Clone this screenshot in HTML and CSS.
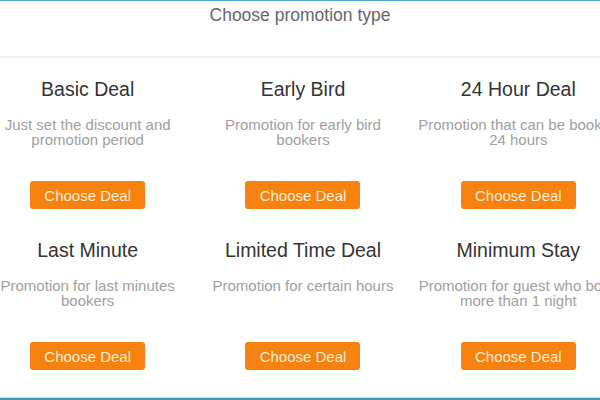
FILE: index.html
```html
<!DOCTYPE html>
<html>
<head>
<meta charset="utf-8">
<link rel="stylesheet" href="styles.css">
</head>
<body>
<div class="frame">
  <div class="header">Choose promotion type</div>
  <div class="grid">
    <div class="card">
      <div class="title">Basic Deal</div>
      <div class="desc">Just set the discount and<br>promotion period</div>
      <button class="btn">Choose Deal</button>
    </div>
    <div class="card">
      <div class="title">Early Bird</div>
      <div class="desc">Promotion for early bird<br>bookers</div>
      <button class="btn">Choose Deal</button>
    </div>
    <div class="card">
      <div class="title">24 Hour Deal</div>
      <div class="desc">Promotion that can be booked<br>24 hours</div>
      <button class="btn">Choose Deal</button>
    </div>
    <div class="card">
      <div class="title">Last Minute</div>
      <div class="desc">Promotion for last minutes<br>bookers</div>
      <button class="btn">Choose Deal</button>
    </div>
    <div class="card">
      <div class="title">Limited Time Deal</div>
      <div class="desc">Promotion for certain hours</div>
      <button class="btn">Choose Deal</button>
    </div>
    <div class="card">
      <div class="title">Minimum Stay</div>
      <div class="desc">Promotion for guest who book<br>more than 1 night</div>
      <button class="btn">Choose Deal</button>
    </div>
  </div>
</div>
</body>
</html>
```

FILE: styles.css
```css
html, body {
  margin: 0;
  padding: 0;
  background: #ffffff;
  overflow: hidden;
}
body {
  font-family: "Liberation Sans", Arial, sans-serif;
}
.frame {
  box-sizing: border-box;
  width: 600px;
  height: 400px;
  border-top: 1px solid #4aa6be;
  border-bottom: 2px solid #3f98b0;
  box-shadow: inset 0 -1px 0 #c4e8f1;
  overflow: hidden;
}
.header {
  box-sizing: border-box;
  height: 57px;
  padding-top: 4px;
  text-align: center;
  font-size: 17.5px;
  line-height: 21px;
  color: #666666;
  border-bottom: 2px solid #efefef;
}
.grid {
  width: 646px;
  margin-left: -20px;
  display: grid;
  grid-template-columns: repeat(3, 1fr);
}
.card {
  display: flex;
  flex-direction: column;
  align-items: center;
  padding: 20px 0 10px;
  text-align: center;
  min-width: 0;
}
.title {
  font-size: 19.5px;
  line-height: 23px;
  color: #333333;
  white-space: nowrap;
}
.desc {
  margin-top: 16px;
  height: 30px;
  font-size: 15px;
  line-height: 15px;
  color: #a0a0a0;
  white-space: nowrap;
}
.btn {
  margin-top: 34px;
  width: 115px;
  height: 28px;
  border: none;
  border-radius: 3px;
  background: #f7820f;
  color: #fdeed6;
  font-family: "Liberation Sans", Arial, sans-serif;
  font-size: 15px;
  padding: 0;
}
```
